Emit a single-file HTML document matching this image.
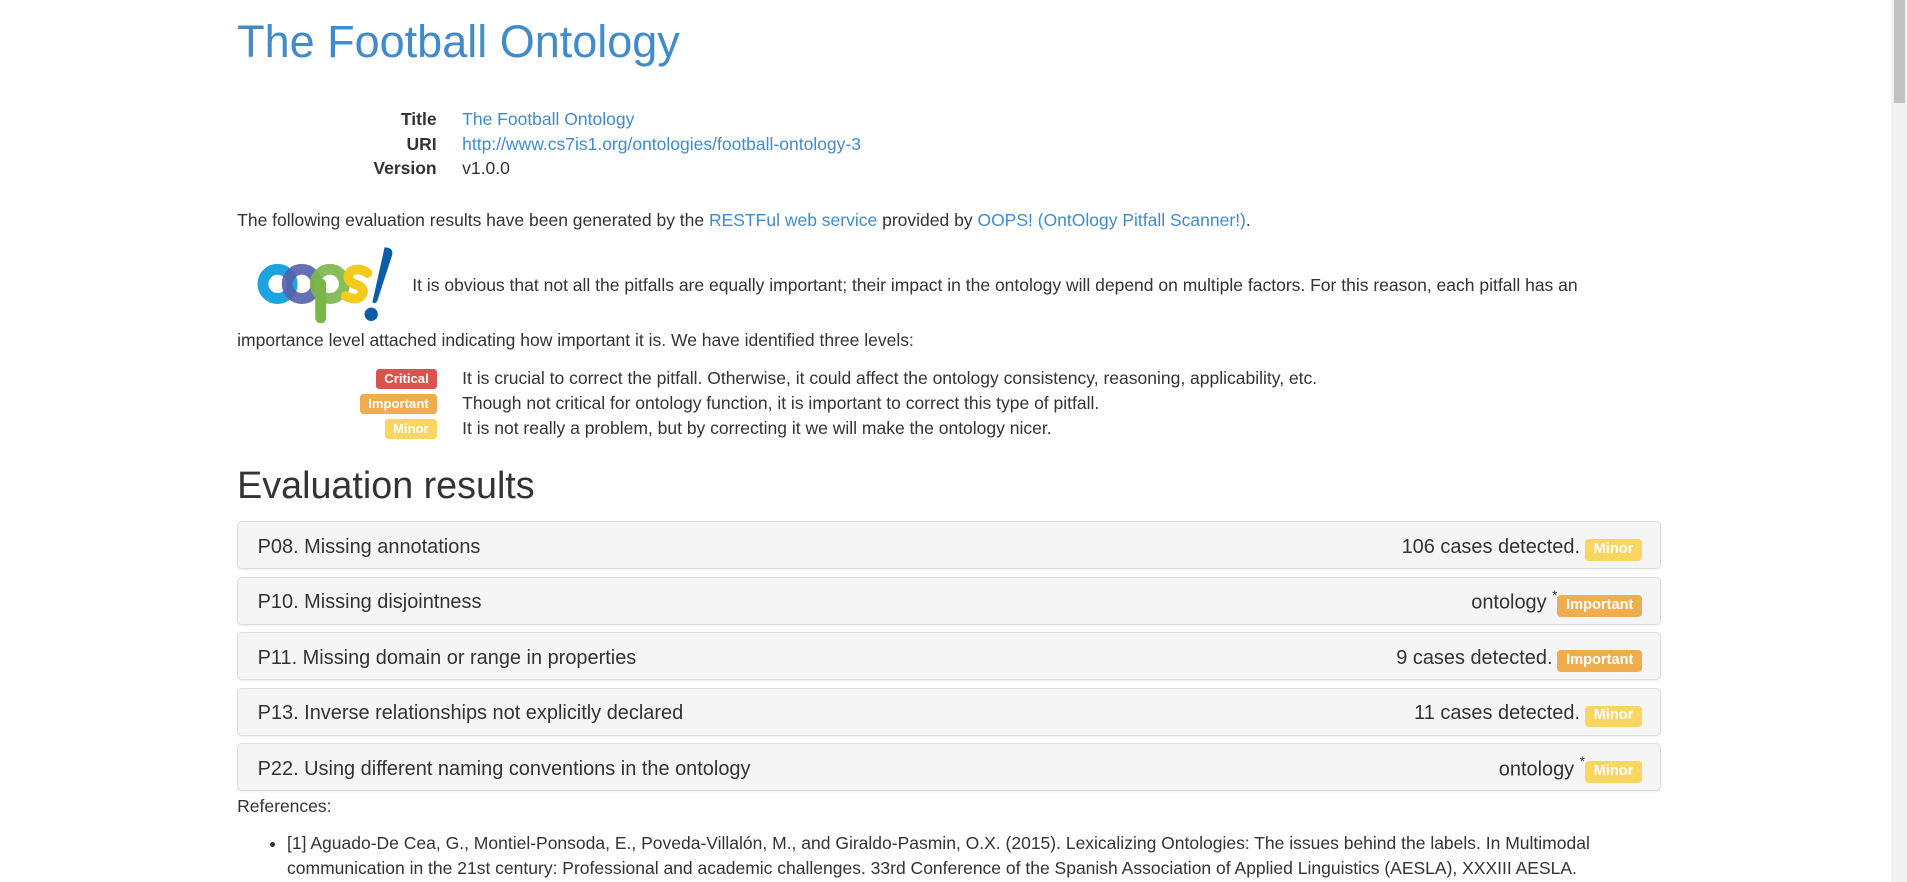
<!DOCTYPE html>
<html><head><meta charset="utf-8"><style>
html{zoom:1.2162}
body{margin:0;font-family:"Liberation Sans",Arial,sans-serif;font-size:14.4px;line-height:1.42;color:#333;background:#fff;width:1568px;overflow:hidden;height:725px;position:relative}
a{color:#428bca;text-decoration:none}
.c{position:absolute;left:195px;width:1171px;top:0}
h1{font-size:37px;font-weight:500;color:#428bca;margin:14px 0 0;line-height:1.1}
dl{margin:33px 0 0;}
.row{display:flex;height:20.5px}
.row dt{width:164px;text-align:right;font-weight:bold}
.row dd{margin:0 0 0 21px}
p{margin:0}
.lab{display:inline-block;padding:.2em .6em .3em;font-size:75%;font-weight:bold;line-height:1;color:#fff;border-radius:.25em;white-space:nowrap;vertical-align:baseline}
.lv .lab{position:relative;top:-1px}
.cr{background:#d9534f}.im{background:#f0ad4e}.mi{background:#f9d662}
h2{font-size:31px;font-weight:500;margin:20px 0 12px;line-height:1.1}
.pn{background:#f5f5f5;border:1px solid #ddd;border-radius:4px;height:38px;margin-bottom:6px;display:flex;align-items:center;justify-content:space-between;padding:3px 15px 0 16px;box-sizing:content-box;height:35px;font-size:16.4px;box-shadow:0 1px 1px rgba(0,0,0,.05)}
.pn .lab{font-size:12px;margin-left:4px;position:relative;top:0}
.pn sup{font-size:11px;position:relative;top:-1px}
.sb{position:absolute;right:0;top:0;width:13px;height:725px;background:#f1f1f1}
.sb div{margin:0 2px;height:85px;background:#c1c1c1}
ul{margin:10px 0 0;padding-left:41px}
</style></head><body>
<div class="c">
<h1>The Football Ontology</h1>
<dl>
<div class="row"><dt>Title</dt><dd><a>The Football Ontology</a></dd></div>
<div class="row"><dt>URI</dt><dd><a>http://www.cs7is1.org/ontologies/football-ontology-3</a></dd></div>
<div class="row"><dt>Version</dt><dd>v1.0.0</dd></div>
</dl>
<p style="margin-top:22px">The following evaluation results have been generated by the <a>RESTFul web service</a> provided by <a>OOPS! (OntOlogy Pitfall Scanner!)</a>.</p>
<div style="margin-top:12px;position:relative;height:62px">
<svg width="120" height="64" viewBox="0 0 120 64" style="position:absolute;left:12px;top:-2px">
<circle cx="21" cy="32" r="12" fill="none" stroke="#1ba4e0" stroke-width="9"/>
<circle cx="41" cy="32" r="12" fill="none" stroke="#5462aa" stroke-width="9" opacity=".9"/>
<circle cx="64" cy="32" r="12" fill="none" stroke="#7ab648" stroke-width="9" opacity=".9"/>
<line x1="56.5" y1="32" x2="56.5" y2="60" stroke="#7ab648" stroke-width="9" stroke-linecap="round"/>
<path d="M95 23 Q88 18 81 22 Q76 28 84 32 Q93 35 91 40 Q87 47 77 42" fill="none" stroke="#f3cb1f" stroke-width="8" stroke-linecap="round"/>
<path d="M109 2 Q117 2 115 9 L103 46 Q101 49 99 47 Z" fill="#0b5ea5"/>
<circle cx="98" cy="57" r="5.5" fill="#0b5ea5"/>
</svg>
<p style="position:absolute;left:144px;top:21px;white-space:nowrap">It is obvious that not all the pitfalls are equally important; their impact in the ontology will depend on multiple factors. For this reason, each pitfall has an</p>
</div>
<p style="margin-top:4px">importance level attached indicating how important it is. We have identified three levels:</p>
<div class="lv" style="margin-top:11px">
<div class="row"><dt><span class="lab cr">Critical</span></dt><dd>It is crucial to correct the pitfall. Otherwise, it could affect the ontology consistency, reasoning, applicability, etc.</dd></div>
<div class="row"><dt><span class="lab im">Important</span></dt><dd>Though not critical for ontology function, it is important to correct this type of pitfall.</dd></div>
<div class="row"><dt><span class="lab mi">Minor</span></dt><dd>It is not really a problem, but by correcting it we will make the ontology nicer.</dd></div>
</div>
<h2>Evaluation results</h2>
<div class="pn"><span>P08. Missing annotations</span><span>106 cases detected.<span class="lab mi">Minor</span></span></div>
<div class="pn"><span>P10. Missing disjointness</span><span>ontology <sup>*</sup><span class="lab im" style="margin-left:0">Important</span></span></div>
<div class="pn"><span>P11. Missing domain or range in properties</span><span>9 cases detected.<span class="lab im">Important</span></span></div>
<div class="pn"><span>P13. Inverse relationships not explicitly declared</span><span>11 cases detected.<span class="lab mi">Minor</span></span></div>
<div class="pn"><span>P22. Using different naming conventions in the ontology</span><span>ontology <sup>*</sup><span class="lab mi" style="margin-left:0">Minor</span></span></div>
<p style="margin-top:-4px">References:</p>
<ul><li>[1] Aguado-De Cea, G., Montiel-Ponsoda, E., Poveda-Villalón, M., and Giraldo-Pasmin, O.X. (2015). Lexicalizing Ontologies: The issues behind the labels. In Multimodal communication in the 21st century: Professional and academic challenges. 33rd Conference of the Spanish Association of Applied Linguistics (AESLA), XXXIII AESLA.</li></ul>
</div>
<div class="sb"><div></div></div>
</body></html>
